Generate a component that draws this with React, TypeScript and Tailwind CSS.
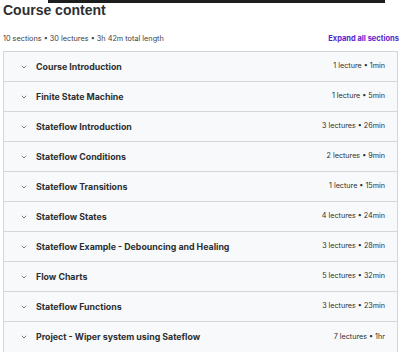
const sections = [
  { title: 'Course Introduction', meta: '1 lecture • 1min' },
  { title: 'Finite State Machine', meta: '1 lecture • 5min' },
  { title: 'Stateflow Introduction', meta: '3 lectures • 26min' },
  { title: 'Stateflow Conditions', meta: '2 lectures • 9min' },
  { title: 'Stateflow Transitions', meta: '1 lecture • 15min' },
  { title: 'Stateflow States', meta: '4 lectures • 24min' },
  { title: 'Stateflow Example - Debouncing and Healing', meta: '3 lectures • 28min' },
  { title: 'Flow Charts', meta: '5 lectures • 32min' },
  { title: 'Stateflow Functions', meta: '3 lectures • 23min' },
  { title: 'Project - Wiper system using Sateflow', meta: '7 lectures • 1hr' },
];

export default function App() {
  return (
    <div className="h-[352px] w-[400px] overflow-hidden bg-white font-['Inter',sans-serif] text-[#2d2f31]">
      {/* tail of the header bar above, cut off by the crop */}
      <div className="ml-[48px] h-[3px] w-[337px] bg-[#1c1d1f]" />

      <h2 className="ml-[3px] mt-[-1px] font-['Liberation_Sans',Arial,sans-serif] text-[14px] font-bold leading-[16px]">
        Course content
      </h2>

      <div className="mt-[16px] flex items-center justify-between pl-[3px] pr-[1px] text-[7.3px] leading-[10px]">
        <span className="text-[#3e4143]">10 sections • 30 lectures • 3h 42m total length</span>
        <button className="whitespace-nowrap text-[7.5px] font-bold text-[#5624d0]">Expand all sections</button>
      </div>

      <div className="ml-[3px] mt-[7px] w-[395px] border border-[#d1d7dc]">
        {sections.map((s, i) => (
          <div
            key={s.title}
            className={`flex h-[30px] items-center bg-[#f7f9fa] pl-[17px] pr-[12px] ${
              i < sections.length - 1 ? 'border-b border-[#d1d7dc]' : ''
            }`}
          >
            <svg width="6" height="4" viewBox="0 0 6 4" className="mr-[9px] shrink-0">
              <path d="M0.8 0.8 L3 3 L5.2 0.8" fill="none" stroke="#6a6f73" strokeWidth="0.9" />
            </svg>
            <span className="flex-1 truncate text-[8.8px] font-bold">{s.title}</span>
            <span className="shrink-0 text-[7.2px]">{s.meta}</span>
          </div>
        ))}
      </div>
    </div>
  );
}
